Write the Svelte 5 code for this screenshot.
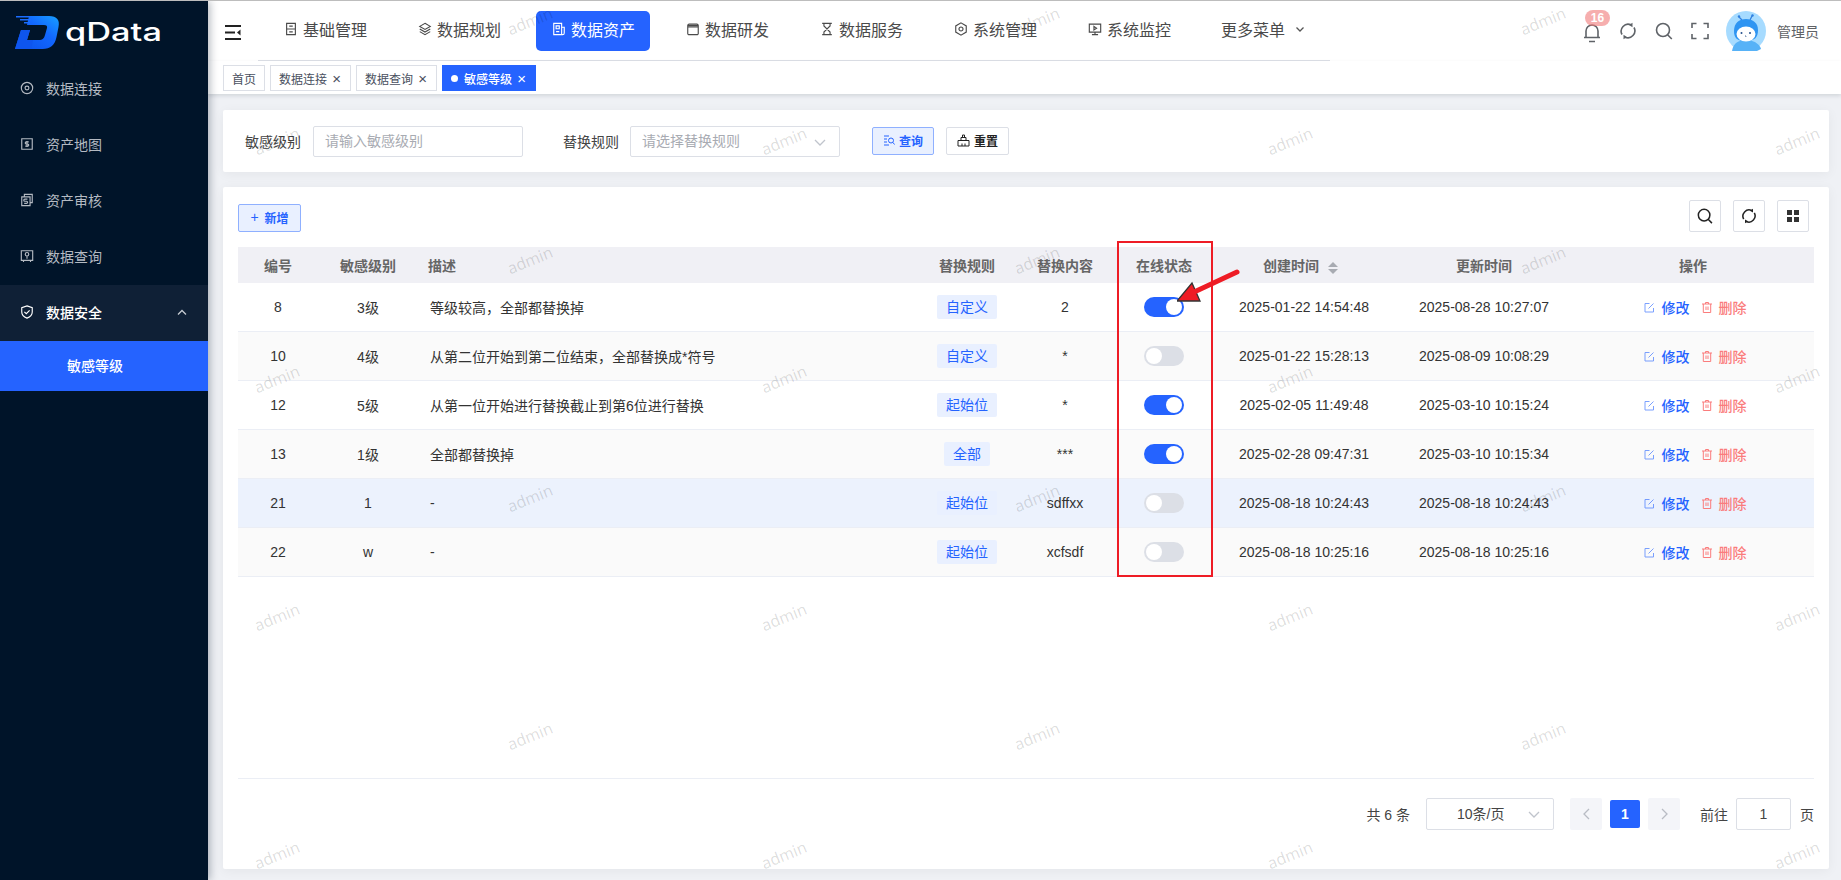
<script>
  const menus = [
    { name: '基础管理', icon: 'M3 1.5h10v13H3z M3 8h10 M6 4.7h4 M6 11.3h4' },
    { name: '数据规划', icon: 'M8 1.5 14 5 8 8.5 2 5z M2 8l6 3.5L14 8 M2 11l6 3.5 6-3.5' },
    { name: '数据资产', icon: 'M2 1.5h9v13H2z M4.7 4.5h3.6v3.2H4.7z M4.7 11h3.6 M11 6h3v6.5a2 2 0 0 1-2 2h-1', active: true },
    { name: '数据研发', icon: 'M2 4a1.5 1.5 0 0 1 1.5-1.5h9A1.5 1.5 0 0 1 14 4v9a1.5 1.5 0 0 1-1.5 1.5h-9A1.5 1.5 0 0 1 2 13z M2 5.5h12 M2 4h12' },
    { name: '数据服务', icon: 'M2.5 1.5h11 M2.5 14.5h11 M4.5 1.5v3L11.5 11.5v3 M11.5 1.5v3L4.5 11.5v3' },
    { name: '系统管理', icon: 'M8 1 14 4.5v7L8 15 2 11.5v-7z M8 5.7a2.3 2.3 0 1 0 0 4.6 2.3 2.3 0 1 0 0-4.6z' },
    { name: '系统监控', icon: 'M1.5 2.5h13v9h-13z M8 11.5v3 M4.5 14.5h7 M6.8 5l3 2-3 2z' }
  ]

  const sides = [
    { name: '数据连接', icon: 'M8 1.5a6.5 6.5 0 1 0 0 13 6.5 6.5 0 1 0 0-13z M8 5.8a2.2 2.2 0 1 0 0 4.4 2.2 2.2 0 1 0 0-4.4z' },
    { name: '资产地图', icon: 'M2 2h12v12H2z M10 5.6H7.2a1.2 1.2 0 0 0 0 2.4h1.6a1.2 1.2 0 0 1 0 2.4H6 M8 4.5v7' },
    { name: '资产审核', icon: 'M5 4V1.5h9V11h-2.5 M2 4.5h9.5v10H2z M8.5 7H5.5a1 1 0 0 0 0 2.4h2a1 1 0 0 1 0 2.4H4.8' },
    { name: '数据查询', icon: 'M1.5 2h13v11h-13z M4 13v1.8 M12 13v1.8 M8 4a2 2 0 1 0 0 4 2 2 0 1 0 0-4z M8 8v3' }
  ]

  const rows = [
    { id: 8, level: '3级', desc: '等级较高，全部都替换掉', rule: '自定义', content: '2', on: true, created: '2025-01-22 14:54:48', updated: '2025-08-28 10:27:07' },
    { id: 10, level: '4级', desc: '从第二位开始到第二位结束，全部替换成*符号', rule: '自定义', content: '*', on: false, created: '2025-01-22 15:28:13', updated: '2025-08-09 10:08:29' },
    { id: 12, level: '5级', desc: '从第一位开始进行替换截止到第6位进行替换', rule: '起始位', content: '*', on: true, created: '2025-02-05 11:49:48', updated: '2025-03-10 10:15:24' },
    { id: 13, level: '1级', desc: '全部都替换掉', rule: '全部', content: '***', on: true, created: '2025-02-28 09:47:31', updated: '2025-03-10 10:15:34' },
    { id: 21, level: '1', desc: '-', rule: '起始位', content: 'sdffxx', on: false, created: '2025-08-18 10:24:43', updated: '2025-08-18 10:24:43' },
    { id: 22, level: 'w', desc: '-', rule: '起始位', content: 'xcfsdf', on: false, created: '2025-08-18 10:25:16', updated: '2025-08-18 10:25:16' }
  ]

  // watermark tiles alternate between two column offsets
  const marks = []
  ;[20, 140, 259, 378, 497, 616, 735, 854].forEach((y, i) => {
    const xs = i % 2 ? [277, 784, 1290, 1797] : [530, 1037, 1543]
    xs.forEach((x) => marks.push({ x, y }))
  })
</script>

<div class="app">
  <aside class="side">
    <div class="logo">
      <svg width="46" height="36" viewBox="0 0 46 36">
        <defs>
          <linearGradient id="dg" x1="0" y1="1" x2="1" y2="0">
            <stop offset="0" stop-color="#0b4fe8" />
            <stop offset="0.6" stop-color="#1268ff" />
            <stop offset="1" stop-color="#18a0ff" />
          </linearGradient>
        </defs>
        <path d="M14 2h20c8 0 11 4 9.500 11l-2 10c-1.500 8-6 12-14 12H0L6 16h9l-3 10h12c3 0 5-1 6-5l2-7c.5-2-.5-3-3-3H12z" fill="url(#dg)" />
        <path d="M6 16h9l-3 10 6 0-2 9H0z" fill="#0e55ee" />
        <path d="M1 2h13v1.600H1z M5 5h11v1.600H5z M9 8h6v1.600H9z" fill="#1a6dff" />
      </svg>
      <svg class="word" width="98" height="36" viewBox="0 0 98 36">
        <text x="0" y="27" textLength="97" lengthAdjust="spacingAndGlyphs">qData</text>
      </svg>
    </div>
    {#each sides as s}
      <div class="side-item">
        <svg class="ic" width="14" height="14" viewBox="0 0 16 16"><path d={s.icon} /></svg>
        <span>{s.name}</span>
      </div>
    {/each}
    <div class="side-item open">
      <svg class="ic" width="14" height="14" viewBox="0 0 16 16"><path d="M8 1l6 2v5c0 3.500-2.500 5.800-6 7-3.500-1.200-6-3.500-6-7V3z M5 7.800l2.200 2.200L11 6.200" /></svg>
      <span>数据安全</span>
      <svg class="up" width="10" height="6" viewBox="0 0 10 6"><path d="M1 5.500 5 1.500l4 4" /></svg>
    </div>
    <div class="side-sub">敏感等级</div>
  </aside>

  <div class="main">
    <header class="head">
      <svg class="burger" width="16" height="15" viewBox="0 0 16 15">
        <path d="M0 1h16M0 7.500h10M0 14h16" />
        <path class="fill" d="M15.500 4.500v6l-3.500-3z" />
      </svg>
      <nav class="nav">
        {#each menus as m}
          <div class="nav-item" class:active={m.active}>
            <svg width="14" height="14" viewBox="0 0 16 16"><path d={m.icon} /></svg>
            <span>{m.name}</span>
          </div>
        {/each}
        <div class="nav-item more">
          <span>更多菜单</span>
          <svg class="down" width="8" height="5" viewBox="0 0 8 5"><path d="M.5.5 4 4 7.500.5" /></svg>
        </div>
      </nav>
      <div class="tools">
        <div class="bell">
          <svg width="18" height="20" viewBox="0 0 18 20"><path d="M3 14V8a6 6 0 0 1 12 0v6 M1 14.500h16 M6 18.500h6" /></svg>
          <b>16</b>
        </div>
        <svg width="18" height="18" viewBox="0 0 18 18"><path d="M3 12.500A7 7 0 0 1 12 2.800 M15 5.500A7 7 0 0 1 6 15.200" /><path class="fill" d="M13.500 .8v4.400L10 3z M4.500 17.200v-4.400L8 15z" /></svg>
        <svg width="18" height="18" viewBox="0 0 18 18"><path d="M8 1.500a6.500 6.500 0 1 0 0 13 6.500 6.500 0 1 0 0-13z M12.800 13l4 4" /></svg>
        <svg width="18" height="18" viewBox="0 0 18 18"><path d="M1 6V1.500h4.500 M12.500 1.500H17V6 M17 12v4.500h-4.500 M5.500 16.500H1V12" /></svg>
        <svg class="avatar" width="40" height="40" viewBox="0 0 40 40">
          <circle cx="20" cy="20" r="20" fill="#a6dbff" />
          <path d="M6 40c1-6 4-9 8-10h12c4 1 8 4 9 8l-4 2z" fill="#57b2f7" />
          <path d="M13 6l3 3M26 5l-2 4" stroke="#2f7fe0" stroke-width="1.300" fill="none" />
          <circle cx="13" cy="5.500" r="1.200" fill="#2f7fe0" />
          <circle cx="26.500" cy="4.500" r="1.200" fill="#2f7fe0" />
          <path d="M8 20c0-8 5-12 12-12s12 4 12 11c0 7-3 11-12 11S8 27 8 20z" fill="#2f95f2" />
          <ellipse cx="20" cy="23" rx="9.500" ry="7.500" fill="#fff" />
          <circle cx="15.500" cy="22" r="1" fill="#24508c" />
          <circle cx="24" cy="22" r="1" fill="#24508c" />
          <path d="M19.500 24.500l.5 1.500" stroke="#24508c" stroke-width=".8" fill="none" />
        </svg>
        <span class="user">管理员</span>
      </div>
    </header>

    <div class="tabs">
      <div class="tab">首页</div>
      <div class="tab">数据连接<i class="close">×</i></div>
      <div class="tab">数据查询<i class="close">×</i></div>
      <div class="tab on"><em></em>敏感等级<i class="close">×</i></div>
    </div>

    <div class="content">
      <section class="card search">
        <label for="level">敏感级别</label>
        <div class="field"><input id="level" placeholder="请输入敏感级别" /></div>
        <label class="second" for="rule">替换规则</label>
        <div class="field">
          <input id="rule" placeholder="请选择替换规则" />
          <svg class="caret" width="12" height="7" viewBox="0 0 12 7"><path d="M1 1l5 5 5-5" /></svg>
        </div>
        <button class="btn primary first">
          <svg width="12" height="12" viewBox="0 0 12 12"><path d="M1 2h5M1 5h3M1 8h3M1 11h5M8 4a2.500 2.500 0 1 0 0 5 2.500 2.500 0 1 0 0-5zM10 8.500l1.500 2" /></svg>
          查询
        </button>
        <button class="btn dark">
          <svg width="13" height="13" viewBox="0 0 13 13"><path d="M1 12V6.500h11V12zM4 6.500V3.500h5v3M5.500 3.500V1h2v2.500M5 12V9.500M8 12V9.500" /></svg>
          重置
        </button>
      </section>

      <section class="card list">
        <div class="bar">
          <button class="btn primary add"><i>+</i>新增</button>
          <div class="bar-tools">
            <span class="square"><svg width="16" height="16" viewBox="0 0 18 18"><path d="M8 1.500a6.500 6.500 0 1 0 0 13 6.500 6.500 0 1 0 0-13z M12.800 13l4 4" /></svg></span>
            <span class="square"><svg width="16" height="16" viewBox="0 0 18 18"><path d="M3 12.500A7 7 0 0 1 12 2.800 M15 5.500A7 7 0 0 1 6 15.200" /><path class="fill" d="M13.500 .8v4.400L10 3z M4.500 17.200v-4.400L8 15z" /></svg></span>
            <span class="square grid4"><i></i><i></i><i></i><i></i></span>
          </div>
        </div>

        <div class="table-wrap">
          <table>
            <colgroup>
              <col style="width:80px" /><col style="width:100px" /><col style="width:502px" />
              <col style="width:94px" /><col style="width:102px" /><col style="width:96px" />
              <col style="width:184px" /><col style="width:176px" /><col style="width:242px" />
            </colgroup>
            <thead>
              <tr>
                <th>编号</th>
                <th>敏感级别</th>
                <th class="left">描述</th>
                <th>替换规则</th>
                <th>替换内容</th>
                <th>在线状态</th>
                <th class="sort">创建时间<span class="sorter"><u></u><s></s></span></th>
                <th>更新时间</th>
                <th>操作</th>
              </tr>
            </thead>
            <tbody>
              {#each rows as r, i}
                <tr class:striped={i % 2 === 1} class:hover={i === 4}>
                  <td>{r.id}</td>
                  <td>{r.level}</td>
                  <td class="left desc">{r.desc}</td>
                  <td><span class="tag">{r.rule}</span></td>
                  <td>{r.content}</td>
                  <td><span class="switch" class:on={r.on}></span></td>
                  <td>{r.created}</td>
                  <td>{r.updated}</td>
                  <td class="ops">
                    <span class="act edit">
                      <svg width="11" height="11" viewBox="0 0 11 11"><path d="M9.500 6v4H1V1.500h4.500 M4.500 6.500 9.500 1.500" /></svg>
                      修改
                    </span>
                    <span class="act del">
                      <svg width="10" height="11" viewBox="0 0 10 11"><path d="M0 2h10M3.500 2V.5h3V2M1.300 2v8.500h7.400V2M4 4.500v3.500M6 4.500v3.500" /></svg>
                      删除
                    </span>
                  </td>
                </tr>
              {/each}
            </tbody>
          </table>
        </div>

        <footer class="pager">
          <span>共 6 条</span>
          <div class="size">10条/页<svg class="caret" width="12" height="7" viewBox="0 0 12 7"><path d="M1 1l5 5 5-5" /></svg></div>
          <span class="turn"><svg width="7" height="12" viewBox="0 0 7 12"><path d="M6 1 1 6l5 5" /></svg></span>
          <span class="page">1</span>
          <span class="turn"><svg width="7" height="12" viewBox="0 0 7 12"><path d="M1 1l5 5-5 5" /></svg></span>
          <span class="goto">前往</span>
          <div class="jump">1</div>
          <span>页</span>
        </footer>
      </section>
    </div>
  </div>

  <div class="marks">
    {#each marks as m}
      <span style="left:{m.x}px;top:{m.y}px">admin</span>
    {/each}
  </div>

  <!-- annotation drawn over the screenshot -->
  <div class="callout"></div>
  <svg class="arrow" width="66" height="38" viewBox="0 0 66 38">
    <path d="M0 35 15 17 23 35z" fill="#ee1c25" />
    <path d="M15 27 60 6" stroke="#ee1c25" stroke-width="5" stroke-linecap="round" fill="none" />
  </svg>
</div>

<style>
  :global(body) {
    margin: 0;
    background: #f0f2f5;
  }
  .app {
    position: relative;
    display: flex;
    width: 1841px;
    height: 880px;
    overflow: hidden;
    border-top: 1px solid #bdbdbd;
    box-sizing: border-box;
    font-family: "Liberation Sans", "Noto Sans CJK SC", sans-serif;
    font-size: 14px;
    color: #333;
  }
  /* set on the svg so attributes on a path can still override */
  svg {
    flex: none;
    fill: none;
    stroke: currentColor;
    stroke-width: 1.300;
  }
  svg path.fill {
    fill: currentColor;
    stroke: none;
  }

  /* sidebar */
  .side {
    position: relative;
    z-index: 3;
    flex: none;
    width: 208px;
    background: #001429;
    color: #b4bac2;
    box-shadow: 2px 0 8px rgba(0, 21, 41, 0.3);
  }
  .logo {
    display: flex;
    align-items: center;
    gap: 4px;
    height: 60px;
    padding: 2px 0 0 15px;
    box-sizing: border-box;
  }
  .logo svg {
    stroke: none;
  }
  .word text {
    font-family: Inter, sans-serif;
    font-size: 25px;
    font-weight: 500;
    fill: #fff;
  }
  .side-item {
    display: flex;
    align-items: center;
    height: 56px;
    padding: 0 0 2px 20px;
    box-sizing: border-box;
    gap: 12px;
  }
  .side-item.open {
    background: #0f2036;
    color: #fff;
    font-weight: 500;
  }
  .up {
    margin-left: 63px;
    color: #c6cbd2;
  }
  .side-sub {
    height: 50px;
    line-height: 50px;
    padding-left: 67px;
    background: #2563ff;
    color: #fff;
    font-weight: 500;
  }

  /* top header */
  .main {
    flex: 1;
    display: flex;
    flex-direction: column;
    min-width: 0;
  }
  .head {
    flex: none;
    display: flex;
    align-items: stretch;
    height: 60px;
    padding: 0 22px 0 17px;
    background: #fff;
    color: #4a4a4a;
  }
  .burger {
    margin: 24px 17px 0 0;
    color: #222;
    stroke-width: 2;
  }
  .nav {
    display: flex;
    align-items: center;
    gap: 20px;
    width: 1062px;
    padding-left: 10px;
    border-bottom: 1px solid #dcdfe6;
    font-size: 16px;
  }
  .nav-item {
    display: flex;
    align-items: center;
    gap: 5px;
    width: 114px;
    height: 40px;
    padding: 0 15px 3px 16px;
    box-sizing: border-box;
    border-radius: 5px;
    white-space: nowrap;
  }
  .nav-item.active {
    background: #2563ff;
    color: #fff;
  }
  .nav-item.more {
    gap: 11px;
    width: auto;
    padding-left: 15px;
    padding-right: 0;
  }
  .down {
    color: #555;
  }
  .tools {
    display: flex;
    align-items: center;
    justify-content: flex-end;
    flex: 1;
    gap: 18px;
    color: #5f6368;
  }
  .tools svg {
    stroke-width: 1.600;
  }
  .bell {
    position: relative;
    display: flex;
    margin-top: 3px;
  }
  .bell b {
    position: absolute;
    left: 2px;
    top: -13px;
    width: 25px;
    height: 16px;
    line-height: 16px;
    border-radius: 8px;
    background: rgba(240, 120, 120, 0.6);
    color: #fff;
    font-size: 12px;
    font-weight: 700;
    text-align: center;
  }
  .tools .avatar {
    margin-left: -1px;
    stroke: none;
  }
  .user {
    margin-left: -7px;
    color: #606266;
  }

  /* tab strip */
  .tabs {
    position: relative;
    z-index: 1;
    flex: none;
    display: flex;
    gap: 5px;
    height: 33px;
    padding: 4px 0 0 15px;
    box-sizing: border-box;
    background: #fff;
    box-shadow: 0 2px 4px rgba(0, 21, 41, 0.12);
  }
  .tab {
    display: flex;
    align-items: center;
    height: 26px;
    padding: 0 8px;
    box-sizing: border-box;
    border: 1px solid #dcdfe6;
    font-size: 12px;
    color: #495060;
  }
  .tab.on {
    border-color: #2563ff;
    background: #2563ff;
    color: #fff;
    font-weight: 500;
  }
  .tab em {
    width: 7px;
    height: 7px;
    margin-right: 6px;
    border-radius: 50%;
    background: #fff;
  }
  .close {
    margin: 1px 1px 0 5px;
    width: 9px;
    font-style: normal;
    font-size: 15px;
    font-weight: 400;
    line-height: 1;
    text-align: center;
  }

  /* content */
  .content {
    flex: 1;
    display: flex;
    flex-direction: column;
    gap: 15px;
    padding: 16px 12px 11px 15px;
    background: #eff1f5;
    min-height: 0;
  }
  .card {
    background: #fff;
    border-radius: 2px;
    box-shadow: 0 2px 12px rgba(0, 0, 0, 0.05);
  }
  .search {
    flex: none;
    display: flex;
    align-items: center;
    height: 62px;
    padding-left: 22px;
    box-sizing: border-box;
  }
  .search label {
    margin-right: 12px;
    color: #444;
  }
  .search .second {
    margin: 0 11px 0 40px;
  }
  .field {
    position: relative;
    width: 210px;
    box-sizing: border-box;
    height: 31px;
    border: 1px solid #dcdfe6;
    border-radius: 2px;
  }
  .field input {
    width: 100%;
    height: 100%;
    padding: 0 11px;
    box-sizing: border-box;
    border: none;
    outline: none;
    background: transparent;
    font: inherit;
  }
  .field input::placeholder {
    color: #a8abb2;
  }
  .caret {
    position: absolute;
    right: 13px;
    top: 12px;
    color: #c0c4cc;
  }
  .btn {
    display: inline-flex;
    align-items: center;
    justify-content: center;
    gap: 4px;
    height: 28px;
    padding: 0 0 2px;
    border: 1px solid #dcdfe6;
    border-radius: 2px;
    background: #fff;
    font-family: inherit;
    font-size: 12px;
    font-weight: 600;
  }
  .btn svg {
    stroke-width: 1;
  }
  .btn.primary {
    border-color: #8fb0ff;
    background: #e9f0ff;
    color: #2563ff;
  }
  .btn.first {
    width: 62px;
    margin-left: 32px;
  }
  .btn.dark {
    width: 63px;
    margin-left: 12px;
    color: #222;
  }

  /* table card */
  .list {
    flex: 1;
    display: flex;
    flex-direction: column;
    padding: 13px 15px 0;
    min-height: 0;
  }
  .bar {
    flex: none;
    display: flex;
    justify-content: space-between;
    height: 32px;
    margin-bottom: 15px;
  }
  .add {
    width: 63px;
    margin-top: 4px;
  }
  .add i {
    margin-right: 2px;
    font-style: normal;
    font-size: 14px;
    font-weight: 400;
  }
  .bar-tools {
    display: flex;
    gap: 12px;
    margin-right: 5px;
  }
  .square {
    display: flex;
    align-items: center;
    justify-content: center;
    width: 32px;
    height: 32px;
    box-sizing: border-box;
    border: 1px solid #dcdfe6;
    border-radius: 2px;
    color: #222;
  }
  .square svg {
    stroke-width: 1.700;
  }
  .grid4 {
    display: grid;
    grid-template-columns: 5px 5px;
    grid-auto-rows: 5px;
    gap: 1.500px;
    place-content: center;
  }
  .grid4 i {
    display: block;
    width: 5px;
    height: 5px;
    background: #333;
  }
  .table-wrap {
    flex: 1;
    min-height: 0;
  }
  table {
    width: 1576px;
    table-layout: fixed;
    border-collapse: separate;
    border-spacing: 0;
  }
  th {
    height: 36px;
    padding: 0;
    background: #f0f0f5;
    color: #666;
    font-weight: 600;
    text-align: center;
  }
  td {
    box-sizing: border-box;
    height: 49px;
    padding: 0;
    border-bottom: 1px solid #ebeef5;
    text-align: center;
  }
  th.left {
    padding-left: 10px;
    text-align: left;
  }
  td.desc {
    padding-left: 12px;
    text-align: left;
  }
  th.sort {
    padding-right: 7px;
  }
  .sorter {
    display: inline-flex;
    flex-direction: column;
    gap: 2px;
    margin-left: 9px;
    vertical-align: 4px;
  }
  .sorter u,
  .sorter s {
    width: 0;
    height: 0;
    border-left: 5px solid transparent;
    border-right: 5px solid transparent;
  }
  .sorter u {
    border-bottom: 5px solid #a8abb2;
  }
  .sorter s {
    border-top: 5px solid #a8abb2;
  }
  tr.striped td {
    background: #fafafa;
  }
  tr.hover td {
    background: #ecf2fd;
  }
  .tag {
    display: inline-block;
    height: 24px;
    line-height: 24px;
    padding: 0 9px;
    border-radius: 2px;
    background: #e9f0ff;
    color: #2563ff;
  }
  .switch {
    position: relative;
    display: inline-block;
    width: 40px;
    height: 20px;
    border-radius: 10px;
    background: #dcdfe6;
    vertical-align: middle;
  }
  .switch::after {
    content: "";
    position: absolute;
    left: 2px;
    top: 2px;
    width: 16px;
    height: 16px;
    border-radius: 50%;
    background: #fff;
  }
  .switch.on {
    background: #2563ff;
  }
  .switch.on::after {
    left: 22px;
  }
  td.ops {
    padding-left: 4px;
  }
  .act {
    display: inline-flex;
    align-items: center;
    gap: 6px;
    vertical-align: middle;
    font-weight: 500;
  }
  .act svg {
    stroke-width: 1;
  }
  .edit {
    color: #2563ff;
    gap: 7px;
    margin-right: 9px;
  }
  .edit svg {
    opacity: 0.6;
  }
  .del {
    color: #fa7c7c;
  }

  /* pagination */
  .pager {
    flex: none;
    display: flex;
    align-items: center;
    justify-content: flex-end;
    height: 91px;
    padding: 0 0 20px;
    box-sizing: border-box;
    border-top: 1px solid #ebeef5;
    color: #444;
  }
  .size {
    position: relative;
    width: 128px;
    height: 32px;
    line-height: 30px;
    margin: 0 16px;
    padding-left: 30px;
    box-sizing: border-box;
    border: 1px solid #dcdfe6;
    border-radius: 2px;
  }
  .turn {
    display: flex;
    align-items: center;
    justify-content: center;
    width: 32px;
    height: 32px;
    border-radius: 2px;
    background: #f4f5f9;
    color: #b8bcc4;
  }
  .page {
    width: 30px;
    height: 28px;
    line-height: 28px;
    margin: 0 8px;
    border-radius: 2px;
    background: #2563ff;
    color: #fff;
    font-weight: 700;
    text-align: center;
  }
  .goto {
    margin-left: 20px;
  }
  .jump {
    width: 55px;
    height: 32px;
    line-height: 30px;
    margin: 0 9px 0 8px;
    box-sizing: border-box;
    border: 1px solid #dcdfe6;
    border-radius: 2px;
    text-align: center;
  }

  /* overlays */
  .marks {
    position: absolute;
    inset: 0;
    z-index: 2;
    pointer-events: none;
  }
  .marks span {
    position: absolute;
    transform: translate(-50%, -50%) rotate(-22deg);
    font-family: "Open Sans", sans-serif;
    font-size: 16px;
    color: rgba(0, 0, 0, 0.14);
  }
  .callout {
    position: absolute;
    z-index: 4;
    left: 1117px;
    top: 240px;
    width: 96px;
    height: 336px;
    box-sizing: border-box;
    border: 2px solid #ee1c25;
  }
  .arrow {
    position: absolute;
    z-index: 4;
    left: 1177px;
    top: 265px;
  }
</style>
